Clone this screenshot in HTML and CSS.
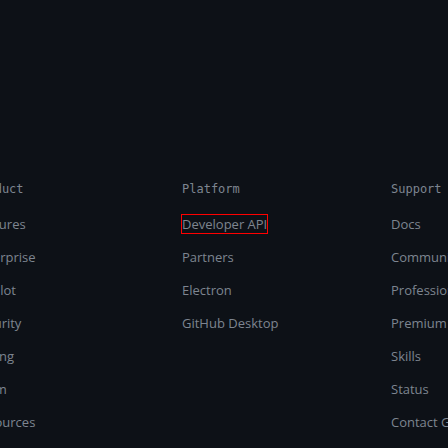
FILE: index.html
```html
<!DOCTYPE html>
<html>
<head>
<meta charset="utf-8">
<link rel="stylesheet" href="styles.css">
</head>
<body>
<footer class="footer">
  <div class="col">
    <h3 class="head">Product</h3>
    <ul class="links">
      <li><a>Features</a></li>
      <li><a>Enterprise</a></li>
      <li><a>Copilot</a></li>
      <li><a>Security</a></li>
      <li><a>Pricing</a></li>
      <li><a>Team</a></li>
      <li><a>Resources</a></li>
    </ul>
  </div>
  <div class="col">
    <h3 class="head">Platform</h3>
    <ul class="links">
      <li><a class="focused">Developer API</a></li>
      <li><a>Partners</a></li>
      <li><a>Electron</a></li>
      <li><a>GitHub Desktop</a></li>
    </ul>
  </div>
  <div class="col">
    <h3 class="head">Support</h3>
    <ul class="links">
      <li><a>Docs</a></li>
      <li><a>Community Forum</a></li>
      <li><a>Professional Services</a></li>
      <li><a>Premium Support</a></li>
      <li><a>Skills</a></li>
      <li><a>Status</a></li>
      <li><a>Contact GitHub</a></li>
    </ul>
  </div>
</footer>
</body>
</html>
```
FILE: styles.css
```css
html, body {
  margin: 0;
  padding: 0;
  background: #0d1117;
  overflow: hidden;
}
body {
  width: 448px;
  height: 448px;
}
.footer {
  display: flex;
  margin-left: -27px;
  padding-top: 180px;
  white-space: nowrap;
}
.col {
  flex: 0 0 209px;
  width: 209px;
}
.head {
  margin: 0 0 17px 0;
  font-family: "DejaVu Sans Mono", monospace;
  font-size: 12px;
  font-weight: normal;
  line-height: 18px;
  color: #7d8590;
}
.links {
  list-style: none;
  margin: 0;
  padding: 0;
  display: flex;
  flex-direction: column;
  gap: 15px;
}
.links li {
  line-height: 18px;
  height: 18px;
}
.links a {
  font-family: "Open Sans", sans-serif;
  font-size: 13px;
  color: #7d8590;
  text-decoration: none;
}
.focused {
  outline: 1px solid #ff0000;
  outline-offset: 0;
}
```
